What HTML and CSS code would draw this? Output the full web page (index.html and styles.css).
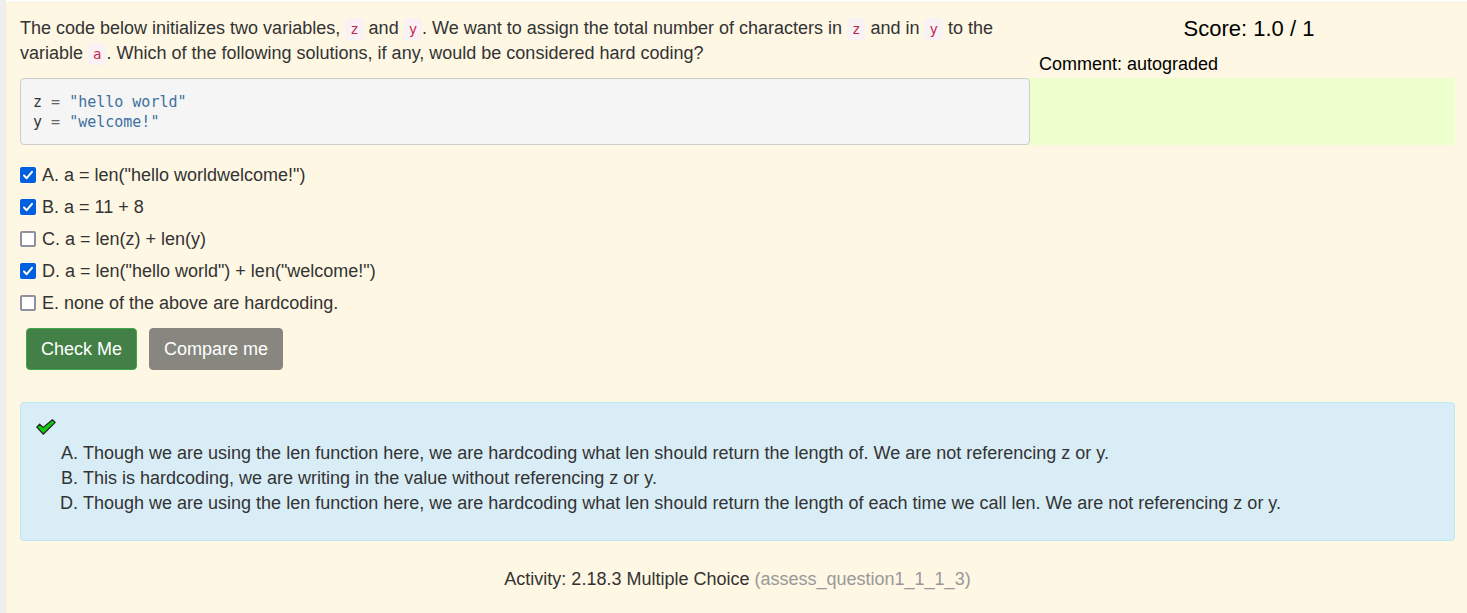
FILE: index.html
```html
<!DOCTYPE html>
<html lang="en">
<head>
<meta charset="utf-8">
<meta name="viewport" content="width=device-width, initial-scale=1">
<title>Activity: 2.18.3 Multiple Choice</title>
<link rel="stylesheet" href="styles.css">
</head>
<body>
<main class="exercise">
  <header class="top">
    <p class="question">The code below initializes two variables, <code>z</code> and <code>y</code>. We want to assign the total number of characters in <code>z</code> and in <code>y</code> to the variable <code>a</code>. Which of the following solutions, if any, would be considered hard coding?</p>
    <aside class="grade">
      <div class="score">Score: 1.0 / 1</div>
      <div class="comment">Comment: autograded</div>
    </aside>
  </header>
  <div class="code-row">
    <pre class="listing">z <span class="op">=</span> <span class="str">"hello world"</span>
y <span class="op">=</span> <span class="str">"welcome!"</span></pre>
  </div>
  <form class="answers">
    <label class="option" for="opt-a"><input type="checkbox" id="opt-a" checked>A. a = len("hello worldwelcome!")</label>
    <label class="option" for="opt-b"><input type="checkbox" id="opt-b" checked>B. a = 11 + 8</label>
    <label class="option" for="opt-c"><input type="checkbox" id="opt-c">C. a = len(z) + len(y)</label>
    <label class="option" for="opt-d"><input type="checkbox" id="opt-d" checked>D. a = len("hello world") + len("welcome!")</label>
    <label class="option" for="opt-e"><input type="checkbox" id="opt-e">E. none of the above are hardcoding.</label>
    <div class="buttons">
      <button type="button" class="btn check">Check Me</button>
      <button type="button" class="btn compare">Compare me</button>
    </div>
  </form>
  <section class="feedback">
    <svg class="tick" viewBox="0 0 20 16" width="20" height="16" role="img" aria-label="Correct">
      <path d="M.8 8.2 3.6 5.2 7.2 8.4 16.4.8 19.2 3.4 7.2 15.2Z" fill="#12c812" stroke="#222" stroke-width="1.2" stroke-linejoin="round"/>
    </svg>
    <ol class="reasons" type="A">
      <li>Though we are using the len function here, we are hardcoding what len should return the length of. We are not referencing z or y.</li>
      <li>This is hardcoding, we are writing in the value without referencing z or y.</li>
      <li value="4">Though we are using the len function here, we are hardcoding what len should return the length of each time we call len. We are not referencing z or y.</li>
    </ol>
  </section>
  <p class="caption">Activity: 2.18.3 Multiple Choice <span class="id">(assess_question1_1_1_3)</span></p>
</main>
</body>
</html>
```
FILE: styles.css
```css
* { box-sizing: border-box; }

html { background: #fff; }

body {
  margin: 0;
  padding-top: 2px;
  border-left: 6px solid #eee;
  font: 18px/25px "Liberation Sans", Arial, sans-serif;
  color: #333;
}

.exercise {
  padding: 13px 12px 21px 13px;
  border: 1px solid #fbeed5;
  border-right: 0;
  border-bottom: 0;
  border-radius: 4px 0 0 0;
  background: #fdf7e3;
}

.top,
.code-row {
  display: grid;
  grid-template-columns: 1010fr 425fr;
}

.question { margin: 0 0 12px; }

.question code {
  padding: 3px 5px;
  border-radius: 4px;
  background: #f9f2f4;
  color: #c7254e;
  font: 14px "DejaVu Sans Mono", monospace;
}

.grade {
  padding-left: 9px;
  color: #000;
}

.score {
  padding-left: 4px;
  font-size: 22px;
  text-align: center;
}

.comment { margin-top: 11px; }

.code-row { background: #edffcc; }

.listing {
  margin: 0;
  padding: 13px 12px 12px;
  border: 1px solid #ccc;
  border-radius: 4px;
  background: #f5f5f5;
  font: 15px/20px "DejaVu Sans Mono", monospace;
}

.op { color: #666; }
.str { color: #4070a0; }

.answers { margin-top: 14px; }

.option {
  display: flex;
  align-items: center;
  gap: 6px;
  width: fit-content;
  height: 32px;
}

.option input {
  appearance: none;
  flex: none;
  width: 16px;
  height: 16px;
  margin: 0;
  border: 2px solid #8f8f9d;
  border-radius: 2px;
  background: #fff;
}

.option input:checked {
  border: 0;
  background: #0060df url("data:image/svg+xml,%3Csvg xmlns='http://www.w3.org/2000/svg' viewBox='0 0 16 16'%3E%3Cpath d='M4 8.5 6.7 11.2 12 4.8' fill='none' stroke='white' stroke-width='2' stroke-linecap='round' stroke-linejoin='round'/%3E%3C/svg%3E");
}

.buttons {
  display: flex;
  gap: 12px;
  margin: 9px 6px 32px;
}

.btn {
  height: 42px;
  padding: 0 14px;
  border: 1px solid;
  border-radius: 4px;
  color: #fff;
  font: inherit;
}

.check {
  border-color: #3fa648;
  background: #438047;
}

.compare {
  border-color: #87877f;
  background: #87877f;
}

.feedback {
  padding: 12px 15px 24px;
  border: 1px solid #bce8f1;
  border-radius: 4px;
  background: #d9edf7;
}

.tick {
  display: block;
  margin: 4px 0 6px;
}

.reasons {
  margin: 0;
  padding-left: 47px;
}

.caption {
  margin: 26px 0 0;
  text-align: center;
}

.id { color: #999; }
```
